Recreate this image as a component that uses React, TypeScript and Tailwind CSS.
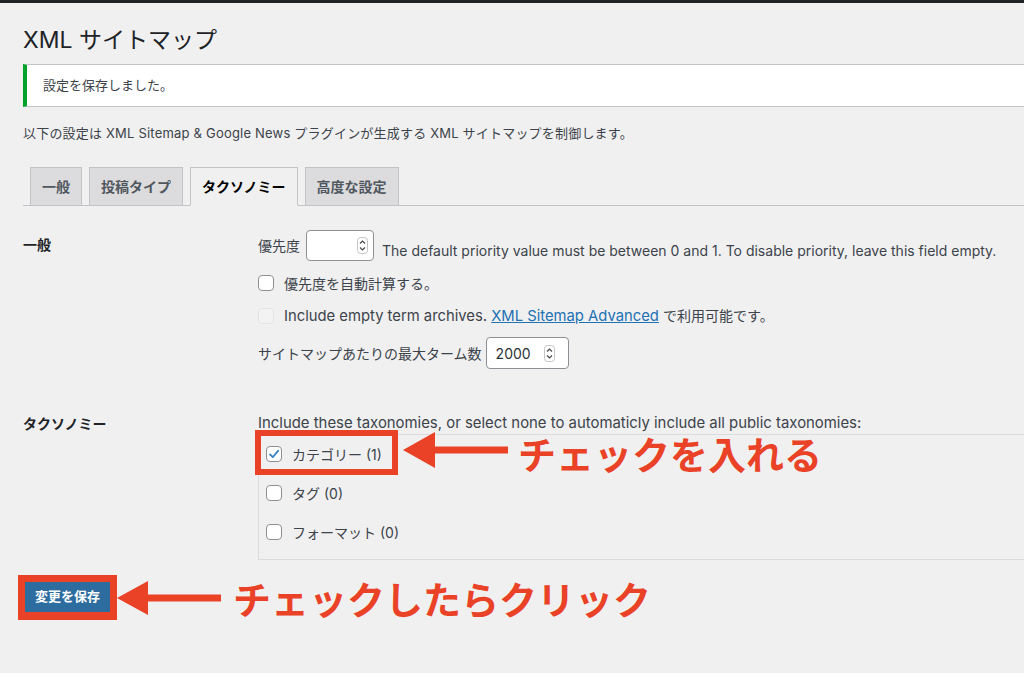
import React from 'react';

const RED = '#ea4226';

const Spinner: React.FC = () => (
  <svg width="11" height="17" viewBox="0 0 11 17" className="shrink-0">
    <rect x="0.5" y="0.5" width="10" height="16" rx="3" fill="#fff" stroke="#c4c4c6" />
    <path d="M3 6.5 L5.5 4 L8 6.5" fill="none" stroke="#4a4a4a" strokeWidth="1.2" />
    <path d="M3 10.5 L5.5 13 L8 10.5" fill="none" stroke="#4a4a4a" strokeWidth="1.2" />
  </svg>
);

const Checkbox: React.FC<{ checked?: boolean; disabled?: boolean }> = ({ checked, disabled }) => (
  <span
    className={`flex h-[16px] w-[16px] shrink-0 items-center justify-center rounded-[4px] border ${
      disabled ? 'border-[#e4e4e6] bg-[#f3f3f4]' : 'border-[#8c8f94] bg-white'
    }`}
  >
    {checked && (
      <svg width="12" height="12" viewBox="0 0 12 12">
        <path d="M2 6.4 L4.8 9.2 L10.2 2.6" fill="none" stroke="#3582c4" strokeWidth="1.8" strokeLinecap="round" strokeLinejoin="round" />
      </svg>
    )}
  </span>
);

const Arrow: React.FC<{ w: number; h: number; head: number }> = ({ w, h, head }) => (
  <svg width={w} height={h} viewBox={`0 0 ${w} ${h}`} className="shrink-0">
    <rect x={head - 2} y={h / 2 - 3.5} width={w - head + 2} height="7" fill={RED} />
    <polygon points={`0,${h / 2} ${head},0 ${head},${h}`} fill={RED} />
  </svg>
);

const tabs = ['一般', '投稿タイプ', 'タクソノミー', '高度な設定'];

const App: React.FC = () => {
  const taxonomies = [
    { name: 'カテゴリー (1)', checked: true },
    { name: 'タグ (0)', checked: false },
    { name: 'フォーマット (0)', checked: false },
  ];

  return (
    <div className="min-h-screen overflow-hidden bg-[#f0f0f1] font-['Inter','Noto_Sans_CJK_JP',sans-serif] text-[14px] text-[#3c434a]">
      <div className="h-[3px] bg-[#1d2327]" />
      <div className="pl-[23px]">
        <h1 className="pt-[22px] text-[23px] leading-[30px] font-normal text-[#1d2327]">XML サイトマップ</h1>

        <div className="mt-[9px] flex h-[43px] items-center border-y border-l-4 border-y-[#c3c4c7] border-l-[#00a32a] bg-white pl-[16px] text-[13px]">
          設定を保存しました。
        </div>

        <p className="mt-[16px] text-[13px] leading-[20px] tracking-[0.2px]">
          以下の設定は XML Sitemap &amp; Google News プラグインが生成する XML サイトマップを制御します。
        </p>

        {/* tabs */}
        <div className="mt-[24px] flex border-b border-[#c3c4c7]">
          {tabs.map((t, i) => (
            <div
              key={t}
              className={`-mb-px ml-[7px] flex h-[39px] items-center border px-[11px] text-[14px] font-semibold ${
                i === 2
                  ? 'border-[#c3c4c7] border-b-[#f0f0f1] bg-[#f0f0f1] text-black'
                  : 'border-[#c3c4c7] bg-[#dcdcde] text-[#50575e]'
              }`}
            >
              {t}
            </div>
          ))}
        </div>

        {/* general row */}
        <div className="flex">
          <div className="w-[235px] shrink-0 pt-[29px] font-semibold leading-[20px] text-[#1d2327]">一般</div>
          <div className="pt-[24px]">
            <div className="flex items-center">
              <span>優先度</span>
              <div className="ml-[6px] flex h-[31px] w-[68px] items-center justify-end rounded-[4px] border border-[#8c8f94] bg-white pr-[5px]">
                <Spinner />
              </div>
              <span className="ml-[8px] mt-[10px] whitespace-nowrap">
                The default priority value must be between 0 and 1. To disable priority, leave this field empty.
              </span>
            </div>
            <label className="mt-[12px] flex h-[20px] items-center gap-[10px]">
              <Checkbox />
              <span>優先度を自動計算する。</span>
            </label>
            <label className="mt-[13px] flex h-[20px] items-center gap-[10px] whitespace-nowrap">
              <Checkbox disabled />
              <span>
                <span className="text-[14.8px]">
                  Include empty term archives.{' '}
                  <a className="text-[#2271b1] underline">XML Sitemap Advanced</a>{' '}
                </span>
                で利用可能です。
              </span>
            </label>
            <div className="mt-[11px] flex items-center">
              <span>サイトマップあたりの最大ターム数</span>
              <div className="ml-[4px] flex h-[32px] w-[83px] items-center justify-between rounded-[4px] border border-[#8c8f94] bg-white pl-[9px] pr-[13px] text-[#2c3338]">
                <span>2000</span>
                <Spinner />
              </div>
            </div>
          </div>
        </div>

        {/* taxonomy row */}
        <div className="flex">
          <div className="w-[235px] shrink-0 pt-[45px] font-semibold leading-[20px] text-[#1d2327]">タクソノミー</div>
          <div className="flex-1 pt-[44px]">
            <p className="text-[14.9px] leading-[20px] whitespace-nowrap">
              Include these taxonomies, or select none to automaticly include all public taxonomies:
            </p>
            <div className="mt-px flex flex-col gap-[19px] border-y border-l border-[#dcdcde] pb-[17px] pl-[7px] pt-[9px]">
              {taxonomies.map((tx, i) => (
                <div key={tx.name} className="relative flex h-[20px] items-center gap-[10px]">
                  <Checkbox checked={tx.checked} />
                  <span>{tx.name}</span>
                  {i === 0 && (
                    <>
                      <div className="absolute left-[-11px] top-[-14px] h-[45px] w-[143px] border-[6px] border-[#ea4226]" />
                      <div className="absolute left-[137px] top-[-12px]">
                        <Arrow w={105} h={36} head={32} />
                      </div>
                      <div className="absolute left-[252px] top-[-9px] whitespace-nowrap font-['Noto_Sans_CJK_JP',sans-serif] text-[38px] font-bold leading-[36px] text-[#ea4226]">
                        チェックを入れる
                      </div>
                    </>
                  )}
                </div>
              ))}
            </div>
          </div>
        </div>

        {/* submit */}
        <div className="-ml-[5px] mt-[15px] flex items-center">
          <div className="border-[7px] border-b-[8px] border-[#ea4226]">
            <button className="flex h-[30px] w-[85px] items-center justify-center bg-[#2c6c9f] text-[13px] font-semibold text-white">
              変更を保存
            </button>
          </div>
          <Arrow w={104} h={34} head={31} />
          <span className="ml-[12px] whitespace-nowrap font-['Noto_Sans_CJK_JP',sans-serif] text-[38px] font-bold leading-[44px] text-[#ea4226]">
            チェックしたらクリック
          </span>
        </div>
      </div>
    </div>
  );
};

export default App;
